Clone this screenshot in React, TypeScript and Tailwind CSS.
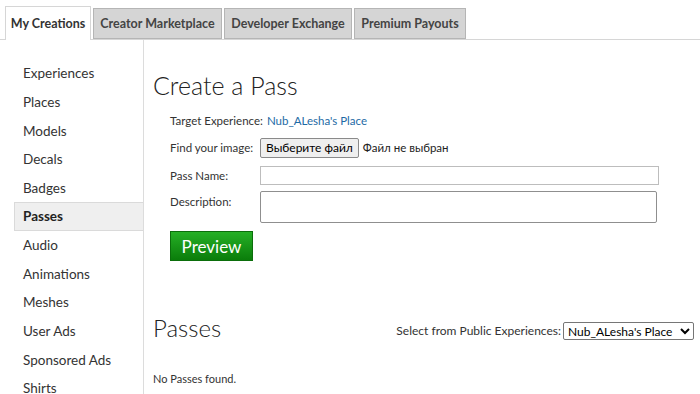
import React from "react";

const tabs = [
  { label: "My Creations", width: "w-[86px]", active: true },
  { label: "Creator Marketplace", width: "w-[129px]", active: false },
  { label: "Developer Exchange", width: "w-[128px]", active: false },
  { label: "Premium Payouts", width: "w-[112px]", active: false },
];

const sideItems = [
  "Experiences",
  "Places",
  "Models",
  "Decals",
  "Badges",
  "Passes",
  "Audio",
  "Animations",
  "Meshes",
  "User Ads",
  "Sponsored Ads",
  "Shirts",
];

const App: React.FC = () => {
  return (
    <div
      className="w-[700px] h-[394px] overflow-hidden bg-white text-[#333]"
      style={{ fontFamily: "Lato, 'Open Sans', sans-serif" }}
    >
      {/* Tabs */}
      <div className="flex items-end gap-[2px] pl-[5px] pt-[6px] border-b border-[#d6d6d6] h-[40px]">
        {tabs.map((t) =>
          t.active ? (
            <div
              key={t.label}
              className={`${t.width} h-[34px] -mb-px pt-[2px] bg-white border border-b-0 border-[#d6d6d6] flex items-center justify-center text-[12.5px] font-bold text-[#333]`}
            >
              {t.label}
            </div>
          ) : (
            <div
              key={t.label}
              className={`${t.width} h-[31px] pt-[2px] bg-[#d5d5d5] border border-[#b5b5b5] flex items-center justify-center text-[12.5px] font-bold text-[#444]`}
            >
              {t.label}
            </div>
          )
        )}
      </div>

      <div className="flex">
        {/* Sidebar */}
        <div className="w-[144px] pt-[19px] border-r border-[#dcdcdc] h-[354px] shrink-0">
          {sideItems.map((item) =>
            item === "Passes" ? (
              <div
                key={item}
                className="ml-[14px] h-[28.67px] pl-[8px] flex items-center bg-[#efefef] border border-r-0 border-[#dadada] text-[13.5px] font-bold text-[#222]"
              >
                {item}
              </div>
            ) : (
              <div
                key={item}
                className="ml-[14px] h-[28.67px] pl-[9px] flex items-center text-[13.5px] text-[#333]"
              >
                {item}
              </div>
            )
          )}
        </div>

        {/* Main */}
        <div className="flex-1 pl-[9px] pr-[6px]">
          <h1 className="mt-[29px] text-[25px] leading-[32px] font-light text-[#222]">
            Create a Pass
          </h1>

          <div className="pl-[17px] mt-[7px] text-[11.5px]">
            <div className="h-[26px] flex items-center">
              <span>Target Experience:</span>
              <span className="ml-[4px] text-[#1d6aa5]">Nub_ALesha's Place</span>
            </div>

            <div className="h-[28px] flex items-center">
              <span className="w-[90px]">Find your image:</span>
              <button className="h-[20px] px-[5px] border border-[#8a8a8a] rounded-[2px] bg-[#efefef] text-[12px] text-black">
                Выберите файл
              </button>
              <span className="ml-[4px] text-[#222]">Файл не выбран</span>
            </div>

            <div className="h-[27px] flex items-center">
              <span className="w-[90px]">Pass Name:</span>
              <input
                type="text"
                className="w-[399px] h-[19px] border border-[#bdbdbd] bg-white"
              />
            </div>

            <div className="flex items-start mt-[2px]">
              <span className="w-[90px] mt-[2px]">Description:</span>
              <textarea className="w-[397px] h-[32px] border border-[#8f8f8f] rounded-[2px] bg-white resize-none" />
            </div>

            <button className="mt-[8px] w-[83px] h-[30px] border border-[#0b6e0b] bg-gradient-to-b from-[#25b025] to-[#0a7d0a] text-white text-[17px] leading-none">
              Preview
            </button>
          </div>

          <div className="mt-[52px] flex items-end justify-between">
            <h2 className="text-[24px] leading-[30px] font-light text-[#222]">Passes</h2>
            <div className="flex items-center mb-[3px] text-[12px]">
              <span className="mr-[2px]">Select from Public Experiences:</span>
              <select className="w-[131px] h-[18px] border border-[#767676] rounded-[2px] text-[12px] text-black bg-white">
                <option>Nub_ALesha's Place</option>
              </select>
            </div>
          </div>

          <p className="mt-[28px] text-[11px] text-[#333]">No Passes found.</p>
        </div>
      </div>
    </div>
  );
};

export default App;
